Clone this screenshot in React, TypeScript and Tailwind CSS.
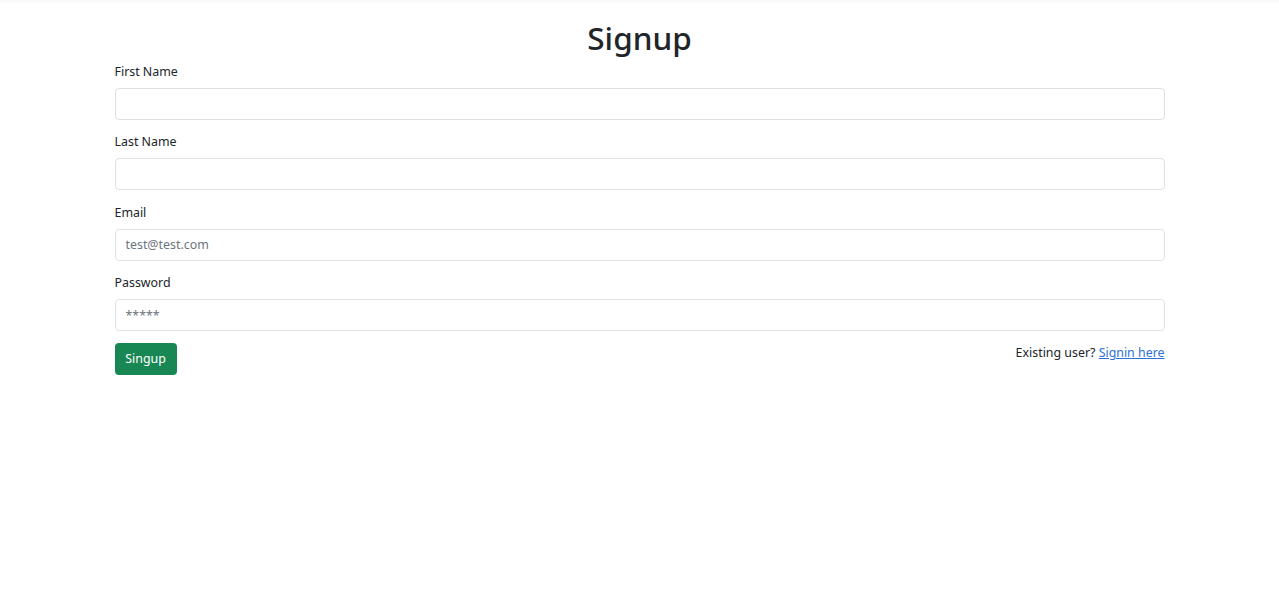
import { useState } from "react";

const font = { fontFamily: '"Segoe UI", "Noto Sans", "Open Sans", sans-serif' };

function Campo({
  label,
  type = "text",
  placeholder,
}: {
  label: string;
  type?: string;
  placeholder?: string;
}) {
  const [valor, setValor] = useState("");
  return (
    <div className="mb-[11.4px]">
      <label className="block mb-[5px] text-[12.4px] leading-[22px] text-[#212529]">{label}</label>
      <input
        type={type}
        value={valor}
        placeholder={placeholder}
        onChange={(e) => setValor(e.target.value)}
        className="block w-full h-[32px] px-[10px] rounded-[4px] border border-[#dee2e6] bg-white text-[12.4px] text-[#212529] placeholder:text-[#6c757d] outline-none"
      />
    </div>
  );
}

export default function App() {
  return (
    <div className="min-h-[612px] bg-white" style={font}>
      <div className="h-[4px] bg-gradient-to-b from-[#f6f6f6] to-white" />
      <div className="w-[1050px] mx-auto pt-[15px]">
        <h1 className="text-center text-[31.5px] leading-[38px] font-medium text-[#212529] mb-[4px]">Signup</h1>
        <form onSubmit={(e) => e.preventDefault()}>
          <Campo label="First Name" />
          <Campo label="Last Name" />
          <Campo label="Email" type="email" placeholder="test@test.com" />
          <Campo label="Password" type="password" placeholder="*****" />
          <div className="flex justify-between items-start pt-[0.5px]">
            <button
              type="submit"
              className="h-[32px] w-[62px] rounded-[4px] bg-[#198754] text-white text-[12.4px] leading-[20px]"
            >
              Singup
            </button>
            <p className="text-[12.4px] leading-[20px] text-[#212529]">
              Existing user?{" "}
              <a href="#" className="text-[#2f70d8] underline">
                Signin here
              </a>
            </p>
          </div>
        </form>
      </div>
    </div>
  );
}
